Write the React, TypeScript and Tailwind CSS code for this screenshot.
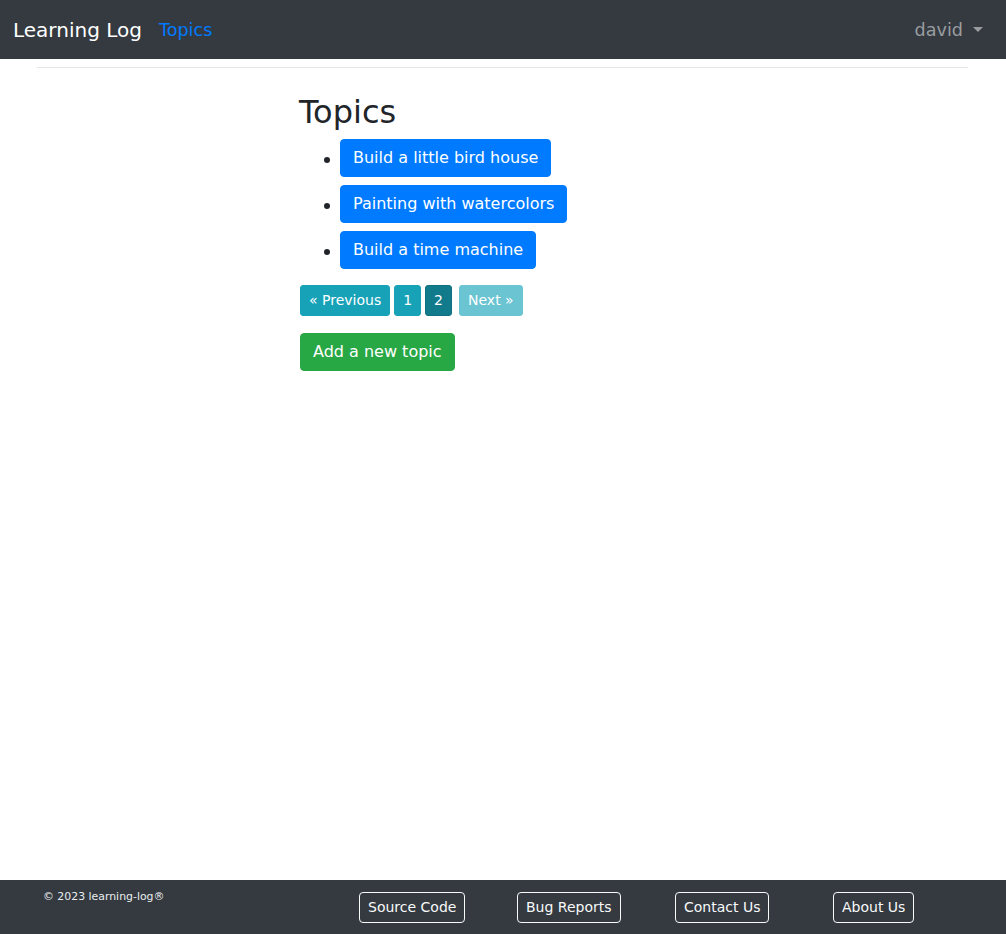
import React from "react";

const font = { fontFamily: '"DejaVu Sans", "Liberation Sans", sans-serif' };

export default function App() {
  return (
    <div className="min-h-screen flex flex-col bg-white text-[#212529]" style={font}>
      <nav className="h-[59px] bg-[#343a40] flex items-center justify-between pl-[13px] pr-[23px] shrink-0">
        <div className="flex items-center">
          <span className="text-[20px] text-white leading-[30px]">Learning Log</span>
          <span className="ml-[17px] text-[17.6px] text-[#007bff] leading-[26px]">Topics</span>
        </div>
        <div className="flex items-center text-[17.6px] text-[#9a9da0] leading-[26px]">
          <span>david</span>
          <span className="ml-[10px] w-0 h-0 border-l-[5px] border-r-[5px] border-t-[5px] border-l-transparent border-r-transparent border-t-[#9a9da0]" />
        </div>
      </nav>

      <main className="flex-1">
        <div className="mt-[8px] ml-[37px] mr-[38px] border-t border-[#e6e6e6]" />
        <div className="ml-[299px] mt-[25px]">
          <h2 className="text-[32px] leading-[38.4px] font-normal mb-[8px]">Topics</h2>
          <ul className="pl-[25px] mb-[16px] text-[16px] leading-[24px]">
            {["Build a little bird house", "Painting with watercolors", "Build a time machine"].map((t, i) => (
              <li key={t} className={"flex items-start " + (i < 2 ? "mb-[8px]" : "")}>
                <span className="mt-[18px] w-[6px] h-[6px] rounded-full bg-[#212529] shrink-0" />
                <span className="ml-[10px] inline-block bg-[#007bff] text-white border border-[#007bff] rounded-[4px] px-[12px] py-[6px] leading-[24px]">
                  {t}
                </span>
              </li>
            ))}
          </ul>
          <div className="flex ml-[1px] text-[14px] leading-[21px] text-white">
            <span className="bg-[#17a2b8] border border-[#17a2b8] rounded-[3px] px-[8px] py-[4px]">« Previous</span>
            <span className="ml-[4px] bg-[#17a2b8] border border-[#17a2b8] rounded-[3px] px-[8px] py-[4px]">1</span>
            <span className="ml-[4px] bg-[#117a8b] border border-[#10707f] rounded-[3px] px-[8px] py-[4px]">2</span>
            <span className="ml-[7px] bg-[#6ac4d2] border border-[#6ac4d2] rounded-[3px] px-[8px] py-[4px]">Next »</span>
          </div>
          <div className="mt-[17px] ml-[1px]">
            <span className="inline-block bg-[#28a745] border border-[#28a745] text-white rounded-[4px] px-[12px] py-[6px] text-[16px] leading-[24px]">
              Add a new topic
            </span>
          </div>
        </div>
      </main>

      <footer className="h-[54px] bg-[#343a40] flex shrink-0 pl-[43px]">
        <div className="w-[316px] pt-[9px] text-[10.9px] leading-[16px] text-[#e9ecef]">© 2023 learning-log®</div>
        {["Source Code", "Bug Reports", "Contact Us", "About Us"].map((t) => (
          <div key={t} className="w-[158px] pt-[12px]">
            <span className="inline-block border border-[#f8f9fa] text-[#f8f9fa] rounded-[4px] px-[8px] py-[4px] text-[14px] leading-[21px]">
              {t}
            </span>
          </div>
        ))}
      </footer>
    </div>
  );
}
